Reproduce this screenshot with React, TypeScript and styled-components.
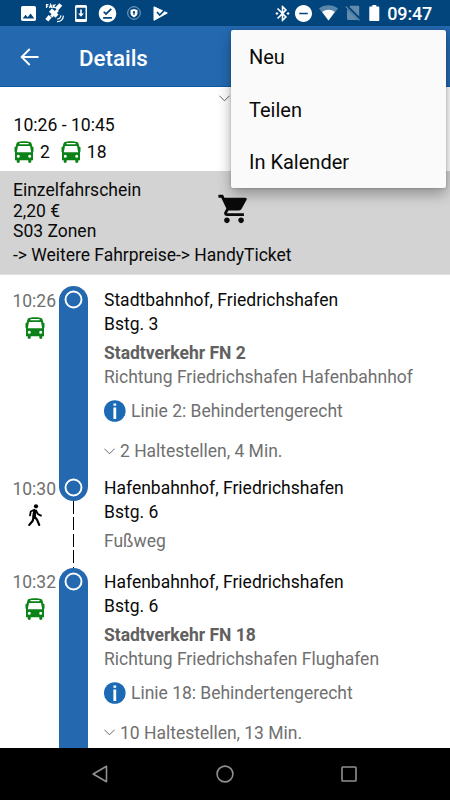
import React from "react";
import styled, { createGlobalStyle } from "styled-components";
import { MdImage, MdOfflinePin, MdBluetoothConnected, MdDoNotDisturbOn, MdShoppingCart } from "react-icons/md";

const Global = createGlobalStyle`
  * { box-sizing: border-box; }
  body { margin: 0; background: #fff; font-family: Roboto, "Liberation Sans", sans-serif; }
  svg { display: block; flex: none; }
`;

const BLUE = "#2469b0";
const GREEN = "#0a8218";

const Screen = styled.div`
  position: relative;
  width: 450px;
  height: 800px;
  overflow: hidden;
  display: flex;
  flex-direction: column;
  background: #fff;
  color: #0a0a0a;
`;

const StatusBar = styled.header`
  flex: none;
  height: 26px;
  display: flex;
  align-items: center;
  justify-content: space-between;
  padding: 0 18px 0 21px;
  background: #01457c;
  color: #fff;
`;

const StatusGroup = styled.div<{ $gap: number }>`
  display: flex;
  align-items: center;
  gap: ${(p) => p.$gap}px;
`;

const Clock = styled.span`
  font-size: 18px;
  font-weight: 500;
  line-height: 26px;
  margin-top: 1px;
  letter-spacing: -0.2px;
`;

const AppBar = styled.div`
  flex: none;
  height: 61px;
  display: flex;
  align-items: center;
  gap: 40px;
  padding: 1px 0 0 20px;
  background: ${BLUE};
  border-bottom: 1px solid #0d5ba6;
  color: #fff;
`;

const Title = styled.h1`
  margin: 2px 0 0;
  font-size: 22.3px;
  font-weight: 500;
  line-height: 30px;
`;

const Summary = styled.section`
  flex: none;
  height: 84px;
  padding: 0 13px;
`;

const Expand = styled.div`
  display: flex;
  padding: 8px 0 0 206px;
  height: 26px;
`;

const TimeSpan = styled.div`
  font-size: 17.6px;
  line-height: 25px;
  height: 24px;
  padding-left: 0.5px;
`;

const Lines = styled.div`
  display: flex;
  gap: 11px;
  height: 30px;
  padding-left: 1px;
`;

const Line = styled.div`
  display: flex;
  align-items: center;
  gap: 6px;
  font-size: 17.5px;
  line-height: 28px;
`;

const Ticket = styled.section`
  flex: none;
  height: 104px;
  padding: 9px 13px 0;
  background: #d3d3d3;
  border-bottom: 1px solid #e2e2e2;
  font-size: 17.5px;
`;

const Fare = styled.div`
  display: grid;
  grid-template-columns: 204px 34px;
  line-height: 20.5px;
`;

const CartSlot = styled.div`
  padding-top: 12px;
`;

const FareLinks = styled.div`
  line-height: 24px;
  margin-top: 1px;
  letter-spacing: -0.02px;
`;

const Trip = styled.main`
  flex: 1;
  min-height: 0;
  overflow: hidden;
  padding-top: 11px;
`;

const Leg = styled.div<{ $height: number }>`
  display: grid;
  grid-template-columns: 59px 29px 1fr;
  height: ${(p) => p.$height}px;
`;

const TimeColumn = styled.div`
  display: flex;
  flex-direction: column;
  align-items: flex-end;
  padding: 2.5px 3px 0 0;
  font-size: 17.5px;
  line-height: 24px;
  color: #707070;
`;

const ModeIcon = styled.div<{ $top?: number }>`
  width: 42px;
  display: flex;
  justify-content: center;
  padding-top: ${(p) => p.$top ?? 4}px;
`;

const Rail = styled.div`
  display: flex;
  flex-direction: column;
  align-items: center;
`;

const Track = styled.div<{ $cap: "start" | "end" }>`
  width: 29px;
  flex: ${(p) => (p.$cap === "start" ? "1" : "0 0 27px")};
  display: flex;
  justify-content: center;
  padding-top: 4px;
  border-radius: ${(p) => (p.$cap === "start" ? "14.5px 14.5px 0 0" : "0 0 14.5px 14.5px")};
  background: ${BLUE};
`;

const WalkPath = styled.div`
  flex: 1;
  width: 1px;
  background: repeating-linear-gradient(#000 0 13px, transparent 13px 16.5px);
`;

const Content = styled.div`
  padding: 2px 0 0 16px;
  font-size: 17.5px;
  line-height: 24px;
  white-space: nowrap;
`;

const Muted = styled.div<{ $top?: number; $bold?: boolean }>`
  display: flex;
  align-items: center;
  gap: 5px;
  margin-top: ${(p) => p.$top ?? 0}px;
  color: ${(p) => (p.$bold ? "#606060" : "#707070")};
  font-weight: ${(p) => (p.$bold ? 700 : 400)};
  letter-spacing: -0.015px;
`;

const NavBar = styled.nav`
  flex: none;
  height: 52px;
  display: grid;
  grid-template-columns: 200px 50px 198px;
  align-items: center;
  justify-items: center;
  background: #000;
`;

const Menu = styled.div`
  position: absolute;
  top: 30px;
  left: 231px;
  width: 215px;
  height: 158px;
  border-radius: 2px;
  background: #fafafa;
  box-shadow: 0 6px 14px rgba(0, 0, 0, 0.32), 0 0 3px rgba(0, 0, 0, 0.22);
`;

const MenuItem = styled.div`
  height: 52.5px;
  padding: 1px 18px 0;
  font-size: 20px;
  line-height: 53px;
`;

const Bus = () => (
  <svg width="20" height="22" viewBox="0 0 20 22">
    <path
      fill={GREEN}
      fillRule="evenodd"
      d="M10 .2c3 0 4.800.2 6 .7 1 .4 1.500 1.200 1.700 2.200l.6 2.600h.5c.4 0 .7.3.7.7v3.800c0 .4-.2.600-.5.700v8.400h-1.700v1.500c0 .7-.6 1.100-1.500 1.100s-1.500-.4-1.500-1.100v-1.500H5.700v1.500c0 .7-.6 1.100-1.500 1.100s-1.500-.4-1.500-1.100v-1.500H1v-8.400c-.3-.1-.5-.3-.5-.700V6.400c0-.4.3-.7.700-.7h.5l.6-2.600C2.500 2.100 3 1.300 4 .9 5.200.4 7 .2 10 .2zM5.500 2v1.300h9V2zM4 4.900l-1.200 6.300h14.400L16 4.900zM4.300 13.700a1.500 1.500 0 1 0 0 3 1.500 1.500 0 0 0 0-3zm11.400 0a1.500 1.500 0 1 0 0 3 1.500 1.500 0 0 0 0-3z"
    />
  </svg>
);

const Walker = () => (
  <svg width="16" height="22" viewBox="0 0 16 22" fill="none" stroke="#000" strokeLinecap="round" strokeLinejoin="round">
    <circle cx="9" cy="2.300" r="2.100" fill="#000" stroke="none" />
    <path strokeWidth="3.600" d="m7.900 7.200-.9 5" />
    <path strokeWidth="1.800" d="M7.200 5.800 3.800 7.500 3 11.400M9 6.500l2 3.600 3 1.500" />
    <path strokeWidth="2.200" d="m7.600 12.500 2.500 3.400 2.100 5M6.600 13l-1 4-3.300 3.900" />
  </svg>
);

const Stop = () => (
  <svg width="19" height="19" viewBox="0 0 19 19">
    <circle cx="9.500" cy="9.500" r="8" fill="none" stroke="#fff" strokeWidth="1.900" />
  </svg>
);

const Chevron = () => (
  <svg width="11" height="7" viewBox="0 0 11 7" fill="none" stroke="#555" strokeWidth=".9">
    <path d="M.4.7 5.500 5.800 10.600.7" />
  </svg>
);

const Info = () => (
  <svg width="22" height="22" viewBox="0 0 22 22">
    <circle cx="10.800" cy="11" r="10.800" fill="#1b6ab5" />
    <path fill="#fff" d="M9.400 3.400h2.800v2.400H9.400zM9.400 7.500h2.800V19H9.400z" />
  </svg>
);

const Satellite = () => (
  <svg width="20" height="20" viewBox="0 0 20 20" fill="none" stroke="#fff">
    <path strokeWidth="1.200" d="M1.500 5V1.500h2M1.500 3.200h1.700M4.500 5 5.700 1.500 7 5M5 4h1.500M8.200 1.400V5M10.500 1.400l-2 2 2 1.600" />
    <path strokeWidth="4" d="m15.800 1.500-4.300 4.700M5.200 13.300l-3.400 4" />
    <path strokeWidth="4.500" d="m5.500 7.200 6.500 6" />
    <path strokeWidth="3" d="m12.800 7-6.500 6.500" />
    <path strokeWidth="1.200" d="M12 16c2.400.2 3.700-1.200 3.900-3.600M12 18.600c3.800.2 6.200-2 6.400-6" />
  </svg>
);

const Download = () => (
  <svg width="14" height="17" viewBox="-1 0 14 17">
    <path fill="#fff" fillRule="evenodd" d="M1.500 0h9A1.500 1.500 0 0 1 12 1.500v14a1.500 1.500 0 0 1-1.500 1.500h-9A1.500 1.500 0 0 1 0 15.500v-14A1.500 1.500 0 0 1 1.500 0zm0 2.700v11.300h9V2.700zM5.200 4.500h1.600v4h2.100L6 11.800 3.100 8.500h2.100z" />
  </svg>
);

const ShieldBadge = () => (
  <svg width="14" height="14" viewBox="0 0 14 14">
    <circle cx="7" cy="7" r="6.300" fill="none" stroke="#a9c3da" strokeWidth=".8" />
    <path fill="#fff" d="M7 3.100 10.500 4v3.200c0 1.800-1.500 3.200-3.500 4.200-2-1-3.500-2.400-3.500-4.200V4z" />
    <path fill="#01457c" d="M7 4.900a1.300 1.300 0 0 1 .6 2.400V9H6.400V7.300A1.300 1.300 0 0 1 7 4.900z" />
  </svg>
);

const PlayCheck = () => (
  <svg width="18" height="15" viewBox="-3 0 18 15">
    <path fill="#fff" stroke="#fff" strokeLinejoin="round" d="M1 .8 14.300 7 1 14.300z" />
    <path fill="none" stroke="#01457c" strokeWidth="1.700" d="m4 6 2.700 3L14 1.700" />
  </svg>
);

const Wifi = () => (
  <svg width="19" height="16" viewBox="0 0 19 16">
    <path fill="#fff" opacity=".35" d="M0 3.400C5.500-.8 13.500-.8 19 3.400L9.500 15.500z" />
    <path fill="#fff" d="M3.200 7.100c3.800-3 8.800-3 12.600 0L9.500 15.500z" />
  </svg>
);

const NoSim = () => (
  <svg width="17" height="16" viewBox="0 0 17 16" opacity=".38">
    <path fill="#fff" d="m4.400 1.700.9-.9H13c.7 0 1.200.5 1.200 1.200v9.400zM2 4l11.200 11H3.200C2.500 15 2 14.500 2 13.800z" />
    <path stroke="#fff" strokeWidth="1.200" d="m.8 1.600 13.700 13.700" />
  </svg>
);

const Battery = () => (
  <svg width="11" height="16" viewBox="0 0 11 16">
    <path fill="#fff" d="M3.300 0h4v1.600h2c.6 0 1 .4 1 1V15c0 .6-.4 1-1 1h-8c-.6 0-1-.4-1-1V2.600c0-.6.4-1 1-1h2z" />
  </svg>
);

const BluetoothSlot = styled.span`
  display: flex;
  justify-content: center;
  width: 12px;
`;

const BackArrow = () => (
  <svg width="19" height="18" viewBox="0 0 19 18" fill="none" stroke="#fff" strokeWidth="1.900">
    <path d="M18.500 9H2M9.700 1 1.700 9l8 8" />
  </svg>
);

interface StationProps {
  name: string;
  platform: string;
}

const Station = ({ name, platform }: StationProps) => (
  <>
    <div>{name}</div>
    <div>{platform}</div>
  </>
);

interface RideProps extends StationProps {
  time: string;
  line: string;
  direction: string;
  notice: string;
  stops: string;
  height: number;
}

const Ride = ({ time, name, platform, line, direction, notice, stops, height }: RideProps) => (
  <Leg $height={height}>
    <TimeColumn>
      {time}
      <ModeIcon><Bus /></ModeIcon>
    </TimeColumn>
    <Rail>
      <Track $cap="start"><Stop /></Track>
    </Rail>
    <Content>
      <Station name={name} platform={platform} />
      <Muted $top={5} $bold>{line}</Muted>
      <Muted>{direction}</Muted>
      <Muted $top={10}><Info />{notice}</Muted>
      <Muted $top={16}><Chevron />{stops}</Muted>
    </Content>
  </Leg>
);

export default function App() {
  return (
    <Screen>
      <Global />
      <StatusBar>
        <StatusGroup $gap={9}>
          <MdImage size={15} viewBox="3 3 18 18" />
          <Satellite />
          <Download />
          <MdOfflinePin size={21} />
          <ShieldBadge />
          <PlayCheck />
        </StatusGroup>
        <StatusGroup $gap={7}>
          <BluetoothSlot><MdBluetoothConnected size={19} /></BluetoothSlot>
          <MdDoNotDisturbOn size={17} viewBox="2 2 20 20" />
          <Wifi />
          <NoSim />
          <Battery />
          <Clock>09:47</Clock>
        </StatusGroup>
      </StatusBar>
      <AppBar>
        <BackArrow />
        <Title>Details</Title>
      </AppBar>
      <Summary>
        <Expand><Chevron /></Expand>
        <TimeSpan>10:26 - 10:45</TimeSpan>
        <Lines>
          <Line><Bus />2</Line>
          <Line><Bus />18</Line>
        </Lines>
      </Summary>
      <Ticket>
        <Fare>
          <div>
            <div>Einzelfahrschein</div>
            <div>2,20 €</div>
            <div>S03 Zonen</div>
          </div>
          <CartSlot><MdShoppingCart size={34} /></CartSlot>
        </Fare>
        <FareLinks>-&gt; Weitere Fahrpreise-&gt; HandyTicket</FareLinks>
      </Ticket>
      <Trip>
        <Ride
          height={188}
          time="10:26"
          name="Stadtbahnhof, Friedrichshafen"
          platform="Bstg. 3"
          line="Stadtverkehr FN 2"
          direction="Richtung Friedrichshafen Hafenbahnhof"
          notice="Linie 2: Behindertengerecht"
          stops="2 Haltestellen, 4 Min."
        />
        <Leg $height={93.5}>
          <TimeColumn>
            10:30
            <ModeIcon $top={3}><Walker /></ModeIcon>
          </TimeColumn>
          <Rail>
            <Track $cap="end"><Stop /></Track>
            <WalkPath />
          </Rail>
          <Content>
            <Station name="Hafenbahnhof, Friedrichshafen" platform="Bstg. 6" />
            <Muted $top={5}>Fußweg</Muted>
          </Content>
        </Leg>
        <Ride
          height={181}
          time="10:32"
          name="Hafenbahnhof, Friedrichshafen"
          platform="Bstg. 6"
          line="Stadtverkehr FN 18"
          direction="Richtung Friedrichshafen Flughafen"
          notice="Linie 18: Behindertengerecht"
          stops="10 Haltestellen, 13 Min."
        />
      </Trip>
      <NavBar>
        <svg width="16" height="18" viewBox="0 0 16 18" fill="none" stroke="#909090" strokeWidth="1.600" strokeLinejoin="round">
          <path d="M14.500 1.300v15.400L1.200 9z" />
        </svg>
        <svg width="18" height="18" viewBox="0 0 18 18" fill="none" stroke="#909090" strokeWidth="1.600">
          <circle cx="9" cy="9" r="7.900" />
        </svg>
        <svg width="16" height="16" viewBox="0 0 16 16" fill="none" stroke="#909090" strokeWidth="1.600">
          <rect x="1" y="1" width="14" height="14" rx=".8" />
        </svg>
      </NavBar>
      <Menu>
        <MenuItem>Neu</MenuItem>
        <MenuItem>Teilen</MenuItem>
        <MenuItem>In Kalender</MenuItem>
      </Menu>
    </Screen>
  );
}
